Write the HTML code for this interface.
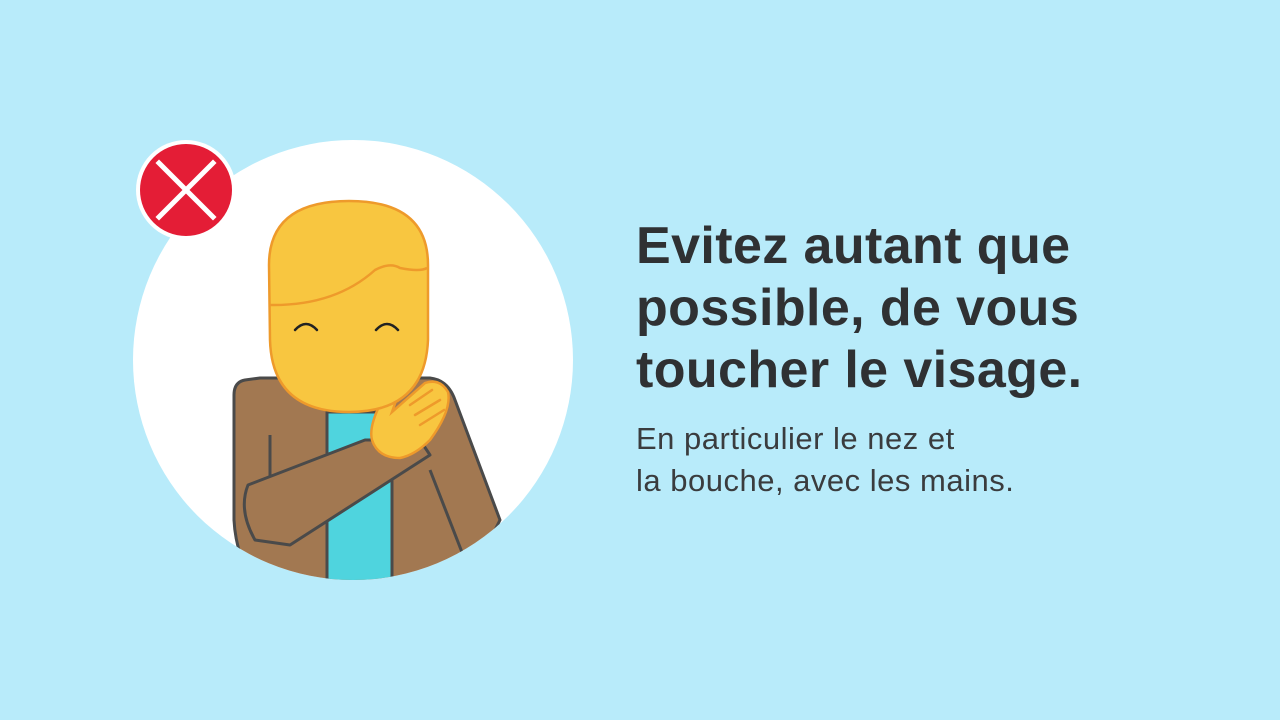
<!DOCTYPE html>
<html><head><meta charset="utf-8"><style>
html,body{margin:0;padding:0}
body{width:1280px;height:720px;background:#b8ebfa;position:relative;overflow:hidden;font-family:"Liberation Sans",sans-serif}
svg{position:absolute;left:0;top:0}
.t{position:absolute;left:636px;top:215px;font-weight:bold;font-size:52px;line-height:62px;color:#2f3133;letter-spacing:0.4px}
.s{position:absolute;left:636px;top:418px;font-size:31px;line-height:42px;color:#3a3c3e;letter-spacing:0.5px}
</style></head><body>
<svg width="1280" height="720" viewBox="0 0 1280 720">
<defs><clipPath id="c"><circle cx="353" cy="360" r="220"/></clipPath></defs>
<circle cx="353" cy="360" r="220" fill="#fff"/>
<g clip-path="url(#c)" stroke="#4a4a4a" stroke-width="3" stroke-linejoin="round">
<path d="M245 380 Q234 382 234 395 L234 520 Q236 560 262 600 L460 600 L500 520 L455 400 Q448 380 430 378 L260 378 Z" fill="#a27851"/>
<path d="M327 412 L327 600 L392 600 L392 440 L385 412 Z" fill="#4fd4de" stroke="#4a4a4a"/>
<line x1="270" y1="435" x2="270" y2="510" />
<path d="M430 470 L465 560" fill="none"/>
<path d="M248 485 Q238 510 255 540 L290 545 L430 455 L420 440 L365 440 Z" fill="#a27851"/>
</g>
<path d="M385 395 Q395 385 398 395 L392 412 L425 383 Q440 378 448 392 Q452 410 430 440 Q415 455 400 458 Q378 458 372 440 Q368 425 385 395 Z" fill="#f8c640" stroke="#ee9a2b" stroke-width="2.5"/>
<g stroke="#ee9a2b" stroke-width="2.5" fill="none" stroke-linecap="round">
<path d="M410 405 L432 390"/><path d="M415 415 L440 400"/><path d="M420 425 L444 410"/>
</g>
<path d="M349 201 Q428 201 428 265 L428 340 Q425 412 349 412 Q272 412 270 340 L269 265 Q269 201 349 201 Z" fill="#f8c640" stroke="#ee9a2b" stroke-width="2.5"/>
<path d="M270 305 Q335 306 375 270 Q390 262 400 268 Q420 272 427 268" fill="none" stroke="#ee9a2b" stroke-width="2.5"/>
<g stroke="#222" stroke-width="2.5" fill="none" stroke-linecap="round">
<path d="M295 330 Q306 318 317 330"/><path d="M376 330 Q387 318 398 330"/>
</g>
<circle cx="186" cy="190" r="50" fill="#fff"/>
<circle cx="186" cy="190" r="46" fill="#e41d36"/>
<g stroke="#fff" stroke-width="5" stroke-linecap="square">
<line x1="159" y1="163" x2="213" y2="217"/><line x1="213" y1="163" x2="159" y2="217"/>
</g>
</svg>
<div class="t">Evitez autant que<br>possible, de vous<br>toucher le visage.</div>
<div class="s">En particulier le nez et<br>la bouche, avec les mains.</div>
</body></html>
